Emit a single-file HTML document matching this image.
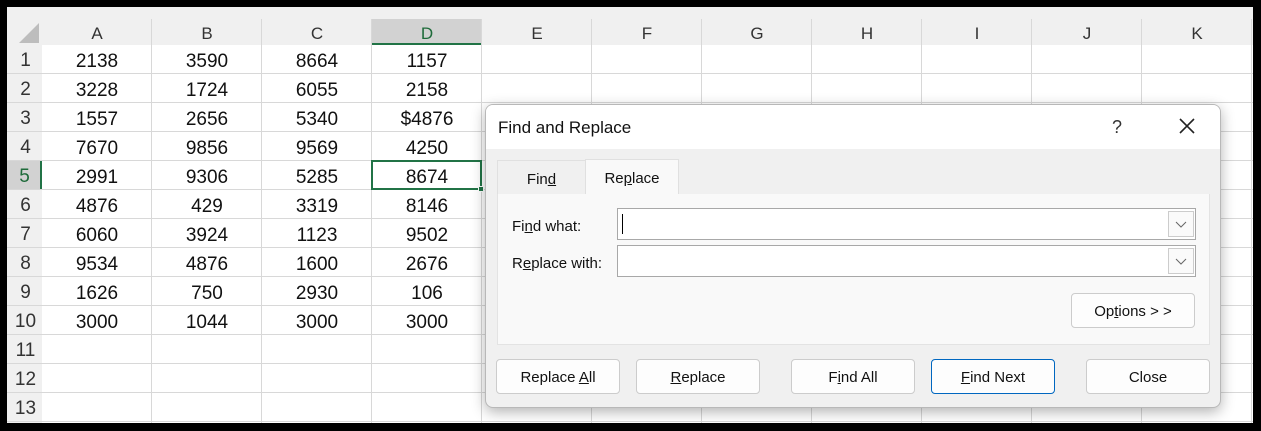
<!DOCTYPE html>
<html><head><style>
*{margin:0;padding:0;box-sizing:border-box}
body{width:1261px;height:431px;background:#000;position:relative;overflow:hidden;font-family:"Liberation Sans",sans-serif}
#sheet{position:absolute;left:7px;top:7px;width:1246px;height:416px;background:#fff;overflow:hidden}
.h{position:absolute;background:#f0f0f0;color:#333;font-size:17px;text-align:center}
.c{position:absolute;font-size:18px;text-align:center;color:#111}
.gl{position:absolute;background:#d8d8d8}
#dlg{position:absolute;left:485px;top:104px;width:736px;height:304px;background:#f0f0f0;border:1px solid #b8b8b8;border-radius:8px;box-shadow:0 4px 14px rgba(0,0,0,.3);overflow:hidden;font-size:15px;color:#111}
.btn{position:absolute;top:254px;width:124px;height:35px;background:#fdfdfd;border:1px solid #ccc;border-radius:4px;text-align:center;line-height:35px;font-size:15px}
.inp{position:absolute;left:131px;width:579px;height:32px;background:#fff;border:1px solid #a8a8a8}
.dd{position:absolute;right:1px;top:2px;width:26px;height:26px;border:1px solid #ccc;background:#fafafa}
u{text-decoration:underline}
</style></head><body>
<div id="sheet"></div>
<script>
var s=document.getElementById('sheet'),h='';
var X0=35,W=110,HH=38,RH=29;
h+='<div class="h" style="left:0;top:0;width:1246px;height:38px"></div>';
h+='<div class="h" style="left:0;top:0;width:35px;height:416px"></div>';
h+='<svg style="position:absolute;left:12px;top:16px" width="20" height="20"><polygon points="20,0 20,20 0,20" fill="#bdbdbd"/></svg>';
var cols='ABCDEFGHIJK';
for(var i=0;i<11;i++){var x=X0+i*W;
h+='<div class="h" style="left:'+x+'px;top:12px;width:'+W+'px;height:26px;line-height:30px;'+(i==3?'background:#d2d2d2;color:#1e6b3a;border-bottom:2px solid #217346;':'')+'">'+cols[i]+'</div>';
h+='<div class="gl" style="left:'+(x+W-1)+'px;top:12px;width:1px;height:416px"></div>';}
var d=[[2138,3590,8664,1157],[3228,1724,6055,2158],[1557,2656,5340,'$4876'],[7670,9856,9569,4250],[2991,9306,5285,8674],[4876,429,3319,8146],[6060,3924,1123,9502],[9534,4876,1600,2676],[1626,750,2930,106],[3000,1044,3000,3000]];
for(var r=0;r<13;r++){var y=HH+r*RH;
h+='<div class="gl" style="left:0;top:'+(y+RH-1)+'px;width:1246px;height:1px"></div>';
h+='<div class="h" style="left:0;top:'+y+'px;width:35px;height:'+(RH-1)+'px;line-height:32px;text-align:center;padding-left:2px;font-size:19px;'+(r==4?'background:#d2d2d2;color:#1e6b3a;border-right:2px solid #217346':'')+'">'+(r+1)+'</div>';
if(d[r])for(var c=0;c<4;c++)h+='<div class="c" style="left:'+(X0+c*W)+'px;top:'+y+'px;width:'+W+'px;line-height:33px;font-size:19px">'+d[r][c]+'</div>';}
h+='<div style="position:absolute;left:'+(X0+3*W-1)+'px;top:'+(HH+4*RH-1)+'px;width:'+(W+1)+'px;height:'+(RH+1)+'px;border:2px solid #217346"></div>';
h+='<div style="position:absolute;left:'+(X0+4*W-4)+'px;top:'+(HH+5*RH-4)+'px;width:6px;height:6px;background:#217346;border:1px solid #fff"></div>';
s.innerHTML=h;
</script>
<div id="dlg">
<div style="position:absolute;left:0;top:0;width:736px;height:44px;background:#fff"></div>
<div style="position:absolute;left:12px;top:13px;font-size:17px">Find and Replace</div>
<div style="position:absolute;left:626px;top:12px;font-size:18px;color:#333">?</div>
<svg style="position:absolute;left:693px;top:13px" width="16" height="16"><path d="M1 1L15 15M15 1L1 15" stroke="#222" stroke-width="1.6"/></svg>
<div style="position:absolute;left:11px;top:55px;width:89px;height:34px;border:1px solid #e0e0e0;border-bottom:none;line-height:38px;text-align:center">Fin<u>d</u></div>
<div style="position:absolute;left:99px;top:54px;width:94px;height:36px;background:#f9f9f9;border:1px solid #e0e0e0;border-bottom:none;line-height:38px;text-align:center">Re<u>p</u>lace</div>
<div style="position:absolute;left:11px;top:89px;width:713px;height:151px;background:#f9f9f9;border:1px solid #e3e3e3;border-top:none">
<div style="position:absolute;left:14px;top:24px">Fi<u>n</u>d what:</div>
<div style="position:absolute;left:14px;top:61px">R<u>e</u>place with:</div>
</div>
<div class="inp" style="top:103px"><div style="position:absolute;left:4px;top:5px;width:1px;height:20px;background:#000"></div><div class="dd"><svg width="24" height="24"><path d="M7 10l5 5 5-5" fill="none" stroke="#666"/></svg></div></div>
<div class="inp" style="top:140px"><div class="dd"><svg width="24" height="24"><path d="M7 10l5 5 5-5" fill="none" stroke="#666"/></svg></div></div>
<div class="btn" style="left:585px;top:188px">Op<u>t</u>ions &gt; &gt;</div>
<div class="btn" style="left:10px">Replace <u>A</u>ll</div>
<div class="btn" style="left:150px"><u>R</u>eplace</div>
<div class="btn" style="left:305px">F<u>i</u>nd All</div>
<div class="btn" style="left:445px;border-color:#0067c0"><u>F</u>ind Next</div>
<div class="btn" style="left:600px">Close</div>
</div>
</body></html>
